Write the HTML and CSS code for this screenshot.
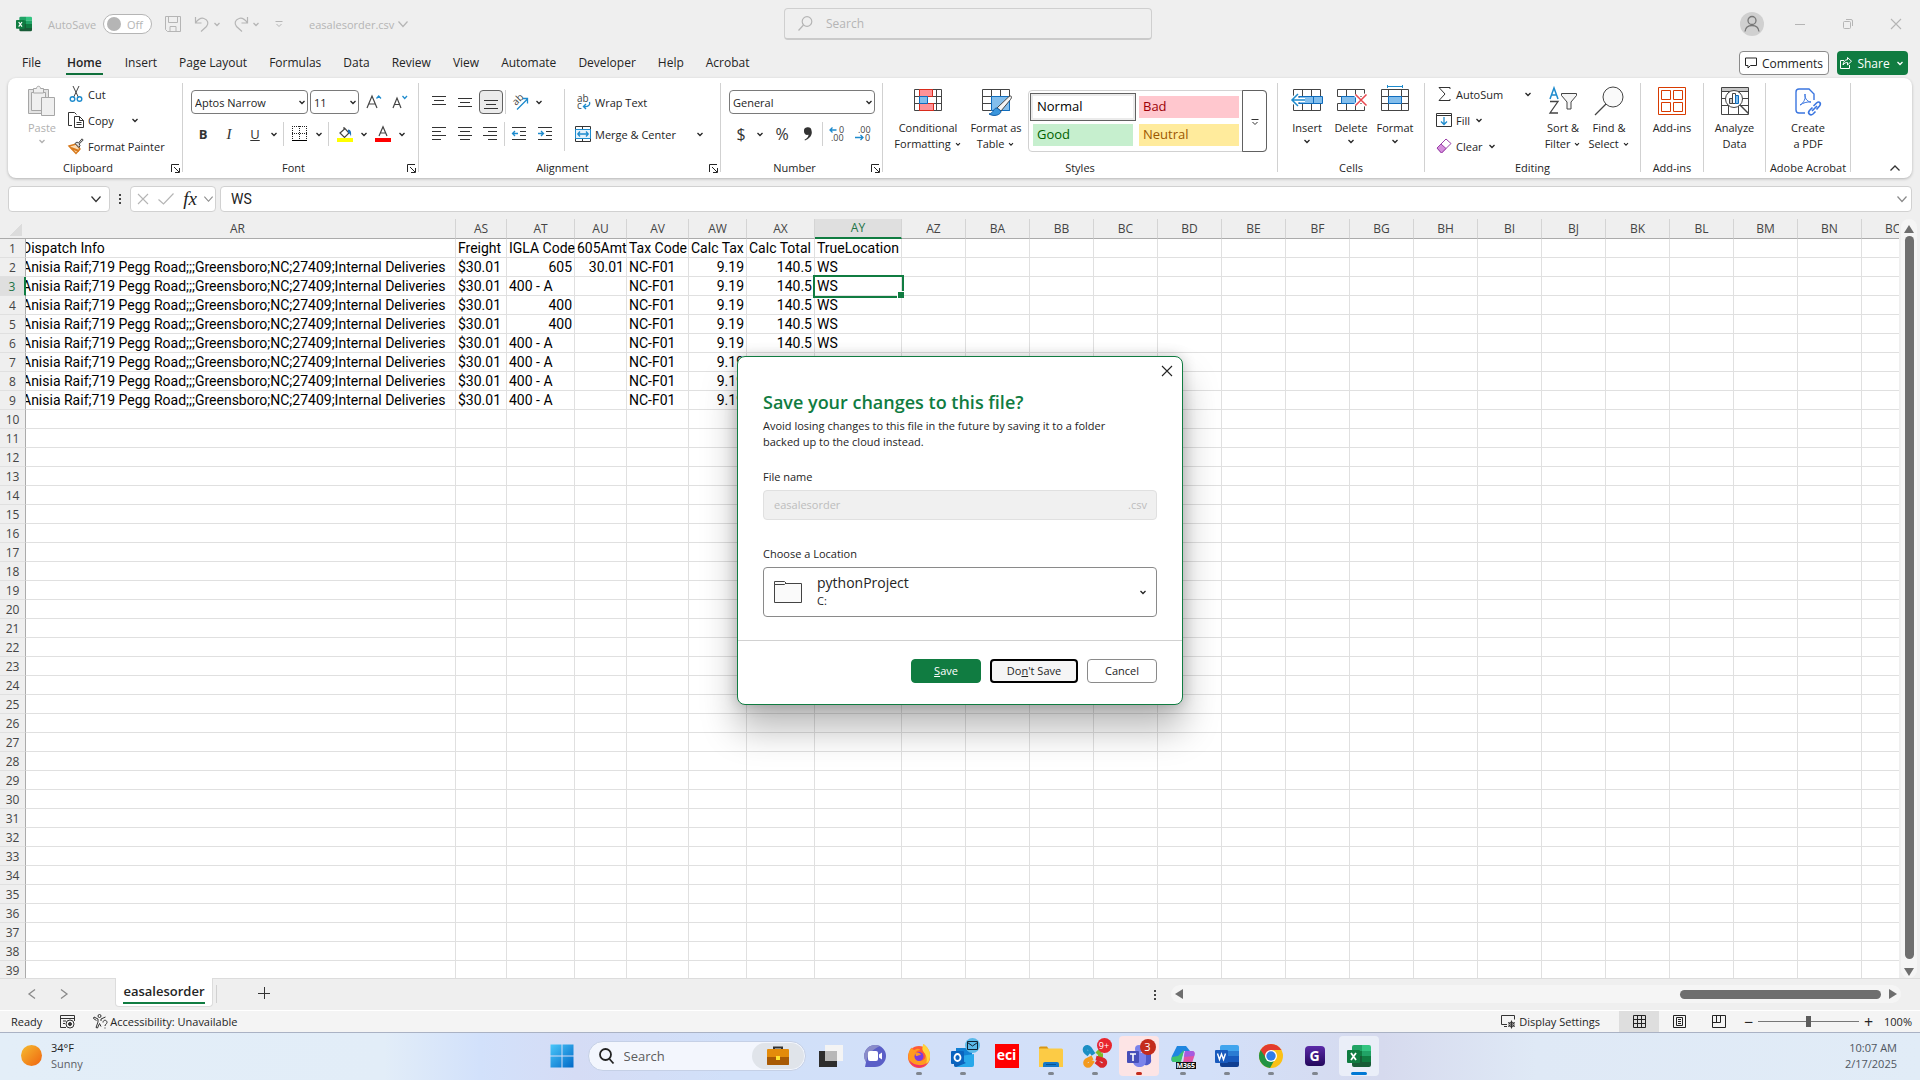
FILE: index.html
```html
<!DOCTYPE html>
<html lang="en">
<head>
    <meta charset="UTF-8">
    <meta name="viewport" content="width=device-width, initial-scale=1.0">
    <title>easalesorder.csv - Excel</title>
    <link rel="stylesheet" href="styles.css">
</head>
<body>
    <!-- shared icons -->
    <svg class="defs" aria-hidden="true">
        <symbol id="chev" viewBox="0 0 10 10"><path d="M2.500 4L5 6.500 7.500 4" fill="none" stroke="currentColor" stroke-width="1.300"/></symbol>
        <symbol id="chev-big" viewBox="0 0 12 12"><path d="M1.500 3.500L6 8.500l4.500-5" fill="none" stroke="currentColor" stroke-width="1.200"/></symbol>
        <symbol id="launcher" viewBox="0 0 9 9"><path d="M.5 8V.5H8M3 3l5 5M8.500 4v4.500H4" fill="none" stroke="currentColor"/></symbol>
        <symbol id="close" viewBox="0 0 12 12"><path d="M1 1l10 10M11 1L1 11" fill="none" stroke="currentColor" stroke-width="1.100"/></symbol>
        <symbol id="excel" viewBox="0 0 24 24">
            <path d="M7 1h8v11H5V3a2 2 0 0 1 2-2z" fill="#21a366"/><path d="M15 1h7a2 2 0 0 1 2 2v4h-9z" fill="#33c481"/>
            <path d="M5 7h10v6H5z" fill="#107c41"/><path d="M15 7h9v5h-9z" fill="#21a366"/>
            <path d="M15 12h9v6h-9z" fill="#107c41"/><path d="M5 12h10v6h9v3a2 2 0 0 1-2 2H7a2 2 0 0 1-2-2z" fill="#185c37"/>
            <rect y="6" width="13" height="13" rx="1" fill="#107c41"/><path d="M4 9l5 7M9 9l-5 7" stroke="#fff" stroke-width="1.800"/>
        </symbol>
    </svg>

    <!-- title bar -->
    <header class="titlebar">
        <svg class="app-icon" viewBox="0 0 24 24"><use href="#excel"/></svg>
        <label class="autosave">AutoSave
            <span class="toggle"><input type="checkbox"><i></i>Off</span>
        </label>
        <button class="tb" aria-label="Save"><svg width="16" height="16" viewBox="0 0 16 16" fill="none" stroke="currentColor"><path d="M.5.5h15v15h-13l-2-2zM3.500.5v6h9v-6M5 15.500v-5h6v5"/></svg></button>
        <button class="tb" aria-label="Undo"><svg width="16" height="16" viewBox="0 0 16 16" fill="none" stroke="currentColor" stroke-width="1.200"><path d="M1.500 1v6h6M1.500 7C4 3.500 7 1.500 10 2.500c4 1.200 5 5 2.500 8L7 15.500"/></svg></button>
        <button class="tb list" aria-label="Undo list"><svg width="10" height="10"><use href="#chev"/></svg></button>
        <button class="tb" aria-label="Redo"><svg width="16" height="16" viewBox="0 0 16 16" fill="none" stroke="currentColor" stroke-width="1.200"><path d="M14.500 1v6h-6M14.500 7C12 3.500 9 1.500 6 2.500c-4 1.200-5 5-2.500 8L9 15.500"/></svg></button>
        <button class="tb list" aria-label="Redo list"><svg width="10" height="10"><use href="#chev"/></svg></button>
        <button class="tb customize" aria-label="Customize toolbar"><svg width="8" height="8" viewBox="0 0 8 8" fill="none" stroke="currentColor"><path d="M.5 1.500h7M1.500 4L4 6.500 6.500 4"/></svg></button>
        <button class="doc-name">easalesorder.csv <svg width="12" height="12"><use href="#chev-big"/></svg></button>
        <label class="search">
            <svg width="15" height="15" viewBox="0 0 15 15" fill="none" stroke="#b5b5b5" stroke-width="1.200"><circle cx="9" cy="5.500" r="4.800"/><path d="M5.500 9L.5 14.500"/></svg>
            <input type="text" placeholder="Search" aria-label="Search">
        </label>
        <div class="window-buttons">
            <button class="avatar" aria-label="Account"><svg width="16" height="18" viewBox="0 0 16 18" fill="none" stroke="#777" stroke-width="1.300"><circle cx="8" cy="5.500" r="4"/><path d="M1 16.500c.5-4 3-6 7-6s6.500 2 7 6"/></svg></button>
            <button aria-label="Minimize"><svg width="10" height="10" viewBox="0 0 10 10"><path d="M0 5.500h10" stroke="currentColor"/></svg></button>
            <button aria-label="Restore"><svg width="10" height="10" viewBox="0 0 10 10" fill="none" stroke="currentColor"><rect x=".5" y="2.500" width="7" height="7" rx="1"/><path d="M3 .5h5a1.500 1.500 0 0 1 1.500 1.500v5"/></svg></button>
            <button aria-label="Close"><svg width="12" height="12"><use href="#close"/></svg></button>
        </div>
    </header>

    <!-- ribbon tabs -->
    <nav class="tabs">
        <button class="file">File</button>
        <button class="active">Home</button>
        <button>Insert</button>
        <button>Page Layout</button>
        <button>Formulas</button>
        <button>Data</button>
        <button>Review</button>
        <button>View</button>
        <button>Automate</button>
        <button>Developer</button>
        <button>Help</button>
        <button>Acrobat</button>
        <div class="tab-actions">
            <button class="comments"><svg width="12" height="12" viewBox="0 0 12 12" fill="none" stroke="currentColor"><path d="M.5 1h11v7.500h-6L3 11V8.500H.5z"/></svg>Comments</button>
            <button class="share"><svg width="12" height="12" viewBox="0 0 12 12" fill="none" stroke="currentColor"><path d="M4 3.500H.5v8h9V8M7.500.5v2.200C5 2.700 3.500 4.500 3 8c1.500-2 2.500-2.500 4.500-2.500V8l4-3.800z"/></svg>Share<svg width="10" height="10"><use href="#chev"/></svg></button>
        </div>
    </nav>

    <!-- ribbon -->
    <section class="ribbon">
        <div class="group clipboard">
            <div class="tools">
                <button class="big disabled">
                    <svg width="28" height="32" viewBox="0 0 28 32" fill="#efefef" stroke="#a6a6a6"><path d="M.5 4.500h20v24H.5z" fill="#e3e3e3"/><path d="M3.500 7.500h14v18h-14z"/><path d="M5.500 8V3.500h3c0-3 4-3 4 0h3V8z"/><path d="M13.500 12.500h13v18h-13z"/></svg>
                    <span>Paste</span><svg width="10" height="10"><use href="#chev"/></svg>
                </button>
                <div class="small-list">
                    <button><svg width="16" height="16" viewBox="0 0 16 16" fill="none" stroke="#444"><path d="M5 0l5.500 11.500M11 0L5.500 11.500"/><circle cx="4.500" cy="13" r="2.300" stroke="#1e8bcd" stroke-width="1.400"/><circle cx="11.500" cy="13" r="2.300" stroke="#1e8bcd" stroke-width="1.400"/></svg>Cut</button>
                    <button><svg width="16" height="16" viewBox="0 0 16 16" fill="none" stroke="#333"><path d="M4 13.500H.5V.5h6l2 2"/><path d="M6.500 4.500h5l4 4v7h-9zM11.500 4.500v4h4M8.500 10.500h5M8.500 12.500h5"/></svg>Copy<svg class="far" width="10" height="10"><use href="#chev"/></svg></button>
                    <button><svg width="16" height="16" viewBox="0 0 16 16"><path d="M1 8l7-2 4 5-4 4.500z" fill="#fbdcb4" stroke="#d87a1d" stroke-width="1.400"/><path d="M3 10l8 3" stroke="#d87a1d" stroke-width="2"/><path d="M7 5.500l2-1.500 1.500 1L14 .8l1.200 1.200-4 4 .8 1.500-1 2z" fill="#ddd" stroke="#444"/></svg>Format Painter</button>
                </div>
            </div>
            <div class="caption"><span>Clipboard</span><button aria-label="Clipboard settings"><svg width="9" height="9"><use href="#launcher"/></svg></button></div>
        </div>

        <div class="group font">
            <div class="tools rows">
                <div class="row">
                    <span class="combo name"><select aria-label="Font"><option>Aptos Narrow</option></select><svg width="10" height="10"><use href="#chev"/></svg></span>
                    <span class="combo size"><select aria-label="Font size"><option>11</option></select><svg width="10" height="10"><use href="#chev"/></svg></span>
                    <button class="ico" aria-label="Increase font size"><svg width="16" height="16" viewBox="0 0 16 16" fill="none"><path d="M1 14L6 2l5 12M2.800 10h6.400" stroke="#444" stroke-width="1.200"/><path d="M10.500 4.500L12.700 2 15 4.500" stroke="#1e8bcd" stroke-width="1.300"/></svg></button>
                    <button class="ico" aria-label="Decrease font size"><svg width="16" height="16" viewBox="0 0 16 16" fill="none"><path d="M1 14L5 4l4 10M2.500 10.500h5" stroke="#444" stroke-width="1.200"/><path d="M10.500 2L12.700 4.500 15 2" stroke="#1e8bcd" stroke-width="1.300"/></svg></button>
                </div>
                <div class="row">
                    <button class="ico"><b>B</b></button>
                    <button class="ico"><i>I</i></button>
                    <button class="ico"><u>U</u></button>
                    <button class="drop" aria-label="Underline list"><svg width="10" height="10"><use href="#chev"/></svg></button>
                    <span class="sep"></span>
                    <button class="ico" aria-label="Borders"><svg width="16" height="16" viewBox="0 0 16 16" fill="none" stroke="#222"><path d="M0 .5h15M0 7.500h15M.5 0v14M7.500 0v14M14.500 0v14" stroke-dasharray="1 1"/><path d="M0 14.500h15" stroke="#000"/></svg></button>
                    <button class="drop" aria-label="Border list"><svg width="10" height="10"><use href="#chev"/></svg></button>
                    <span class="sep"></span>
                    <button class="ico" aria-label="Fill color"><svg width="16" height="16" viewBox="0 0 16 16" fill="none"><path d="M7 1v3M3 7l5-4.500L12 7l-4.500 4.500z" stroke="#444" stroke-width="1.200"/><path d="M11 3.500c3 0 3.500 3 3 7-.7-2.500-1.500-3-3-4z" fill="#1d6fb8"/><path d="M0 12h16v4H0z" fill="#ff0"/></svg></button>
                    <button class="drop" aria-label="Fill colors"><svg width="10" height="10"><use href="#chev"/></svg></button>
                    <button class="ico" aria-label="Font color"><svg width="16" height="16" viewBox="0 0 16 16" fill="none"><path d="M4 10L8 .8 12 10M5.200 7h5.600" stroke="#444" stroke-width="1.200"/><path d="M0 12h16v4H0z" fill="red"/></svg></button>
                    <button class="drop" aria-label="Font colors"><svg width="10" height="10"><use href="#chev"/></svg></button>
                </div>
            </div>
            <div class="caption"><span>Font</span><button aria-label="Font settings"><svg width="9" height="9"><use href="#launcher"/></svg></button></div>
        </div>

        <div class="group alignment">
            <div class="tools">
                <div class="rows align-left">
                    <div class="row">
                        <button class="ico" aria-label="Top align"><svg width="14" height="14" viewBox="0 0 14 14" stroke="#333"><path d="M0 1.500h14M2 5.500h10M0 9.500h14"/></svg></button>
                        <button class="ico" aria-label="Middle align"><svg width="14" height="14" viewBox="0 0 14 14" stroke="#333"><path d="M0 3.500h14M2 7.500h10M0 11.500h14"/></svg></button>
                        <button class="ico pressed" aria-label="Bottom align"><svg width="14" height="14" viewBox="0 0 14 14" stroke="#333"><path d="M0 5.500h14M2 9.500h10M0 13.500h14"/></svg></button>
                        <span class="sep tight"></span>
                        <button class="ico" aria-label="Orientation"><svg width="16" height="16" viewBox="0 0 16 16" fill="none"><text x="0" y="0" transform="translate(4 12) rotate(-45)" font-size="10" fill="#444">ab</text><path d="M5 15.500L15.500 5M10.500 4.500h5v5" stroke="#1e8bcd" stroke-width="1.300"/></svg></button>
                        <button class="drop" aria-label="Orientation list"><svg width="10" height="10"><use href="#chev"/></svg></button>
                    </div>
                    <div class="row">
                        <button class="ico" aria-label="Align left"><svg width="14" height="14" viewBox="0 0 14 14" stroke="#333"><path d="M0 .5h14M0 4.500h9M0 8.500h14M0 12.500h9"/></svg></button>
                        <button class="ico" aria-label="Center"><svg width="14" height="14" viewBox="0 0 14 14" stroke="#333"><path d="M0 .5h14M2 4.500h10M0 8.500h14M2 12.500h10"/></svg></button>
                        <button class="ico" aria-label="Align right"><svg width="14" height="14" viewBox="0 0 14 14" stroke="#333"><path d="M0 .5h14M5 4.500h9M0 8.500h14M5 12.500h9"/></svg></button>
                        <span class="sep tight"></span>
                        <button class="ico" aria-label="Decrease indent"><svg width="14" height="14" viewBox="0 0 14 14" fill="none" stroke="#333"><path d="M0 .5h14M8 4.500h6M8 8.500h6M0 12.500h14"/><path d="M6 6.500H.5M3 4L.5 6.500 3 9" stroke="#1e8bcd" stroke-width="1.300"/></svg></button>
                        <button class="ico" aria-label="Increase indent"><svg width="14" height="14" viewBox="0 0 14 14" fill="none" stroke="#333"><path d="M0 .5h14M8 4.500h6M8 8.500h6M0 12.500h14"/><path d="M0 6.500h5.500M3 4l2.500 2.500L3 9" stroke="#1e8bcd" stroke-width="1.300"/></svg></button>
                    </div>
                </div>
                <div class="rows align-right">
                    <button class="line"><svg width="16" height="16" viewBox="0 0 16 16" fill="none"><text x="2" y="8" font-size="10" fill="#444">ab</text><text x="2" y="15" font-size="10" fill="#444">c</text><path d="M14.500 8c1 3-1 5-6 4.500M11 10l-2.500 2.500L11 15" stroke="#1e8bcd" stroke-width="1.400"/></svg>Wrap Text</button>
                    <button class="line"><svg width="16" height="16" viewBox="0 0 16 16" fill="none"><path d="M.5.500h15v15H.5z" stroke="#333"/><path d="M7.500.5v3M7.500 12.500v3" stroke="#333"/><path d="M.5 3.500h15v9H.5z" fill="#e6f2fb" stroke="#1e8bcd"/><path d="M3 8h10M5 5.500L2.800 8 5 10.500M11 5.500L13.200 8 11 10.500" stroke="#1e8bcd" stroke-width="1.300"/></svg>Merge &amp; Center<svg class="far" width="10" height="10"><use href="#chev"/></svg></button>
                </div>
            </div>
            <div class="caption"><span>Alignment</span><button aria-label="Alignment settings"><svg width="9" height="9"><use href="#launcher"/></svg></button></div>
        </div>

        <div class="group number">
            <div class="tools rows">
                <div class="row">
                    <span class="combo format"><select aria-label="Number format"><option>General</option></select><svg width="10" height="10"><use href="#chev"/></svg></span>
                </div>
                <div class="row">
                    <button class="ico sign">$</button>
                    <button class="drop currency" aria-label="Currencies"><svg width="10" height="10"><use href="#chev"/></svg></button>
                    <button class="ico sign">%</button>
                    <button class="ico" aria-label="Comma style"><svg width="10" height="14" viewBox="0 0 10 14"><path d="M1 4.500a3.500 3.500 0 0 1 7.500-1C10 8 6 12 2 13.500l-.5-.7C4.500 11 5.500 9.500 5.500 7.800 2.500 8.500 1 6.500 1 4.500z" fill="#333"/></svg></button>
                    <span class="sep tight"></span>
                    <button class="ico" aria-label="Increase decimal"><svg width="16" height="16" viewBox="0 0 16 16" fill="none"><text x="10" y="7" font-size="9" fill="#444">0</text><text x="2" y="15" font-size="9" fill="#444">.00</text><path d="M7.500 4H1M3.500 1.500L1 4l2.500 2.500" stroke="#1e8bcd" stroke-width="1.300"/></svg></button>
                    <button class="ico" aria-label="Decrease decimal"><svg width="16" height="16" viewBox="0 0 16 16" fill="none"><text x="3" y="7" font-size="9" fill="#444">.00</text><text x="10" y="15" font-size="9" fill="#444">0</text><path d="M0 11.500h8M5.500 9L8 11.500 5.500 14" stroke="#1e8bcd" stroke-width="1.300"/></svg></button>
                </div>
            </div>
            <div class="caption"><span>Number</span><button aria-label="Number settings"><svg width="9" height="9"><use href="#launcher"/></svg></button></div>
        </div>

        <div class="group styles">
            <div class="tools">
                <button class="big wide">
                    <svg width="28" height="32" viewBox="0 0 28 32" fill="none"><path d="M.5 4.500h27v21H.5zM.5 11.500h27M.5 18.500h27M5.500 4.500v21M22.500 4.500v21" stroke="#444"/><path d="M5.500 4.500h13v7h-13zM5.500 18.500h14v7h-14z" fill="#ff9297" stroke="#d92b1c"/><path d="M5.500 11.500h8v7h-8z" fill="#83beec" stroke="#0f6cbd"/></svg>
                    <span>Conditional<br>Formatting <svg width="8" height="8"><use href="#chev"/></svg></span>
                </button>
                <button class="big mid">
                    <svg width="32" height="32" viewBox="-2 0 32 32" fill="none"><path d="M.5 4.500h27v21H.5zM.5 11.500h27M.5 18.500h27M9.500 4.500v21M18.500 4.500v21" stroke="#444"/><path d="M9.500 11.500h18v14h-18z" fill="#83beec" stroke="#0f6cbd"/><path d="M27 11.500c3-1.500 3 1 1.500 3L19 26l-4-3z" fill="#f5f5f5" stroke="#444"/><path d="M15 23c-4 0-3 5-8 6 5 3 12 1 12-3z" fill="#3a96dd" stroke="#0f5ea8"/></svg>
                    <span>Format as<br>Table <svg width="8" height="8"><use href="#chev"/></svg></span>
                </button>
                <div class="gallery">
                    <div class="swatches">
                        <button class="normal">Normal</button>
                        <button class="bad">Bad</button>
                        <button class="good">Good</button>
                        <button class="neutral">Neutral</button>
                    </div>
                    <button class="more" aria-label="More styles"><svg width="8" height="8" viewBox="0 0 8 8" fill="none" stroke="#333"><path d="M.5 1.500h7M1.500 4L4 6.500 6.500 4"/></svg></button>
                </div>
            </div>
            <div class="caption"><span>Styles</span></div>
        </div>

        <div class="group cells">
            <div class="tools">
                <button class="big">
                    <svg width="32" height="32" viewBox="0 0 32 32" fill="none"><path d="M2.500 4.500h27v21h-27zM2.500 11.500h27M2.500 18.500h27M11.500 4.500v21M20.500 4.500v21" stroke="#444"/><path d="M8 11.500h23.500v7H8z" fill="#83beec" stroke="#0f6cbd"/><path d="M22.500 11.500v7" stroke="#0f6cbd"/><path d="M14 15H1M7 9l-6 6 6 6" stroke="#fff" stroke-width="4"/><path d="M14 15H1M7 9l-6 6 6 6" stroke="#1e8bcd" stroke-width="1.500"/></svg>
                    <span>Insert</span><svg width="10" height="10"><use href="#chev"/></svg>
                </button>
                <button class="big">
                    <svg width="32" height="32" viewBox="0 0 32 32" fill="none"><path d="M2.500 4.500h27v7h-27zM2.500 18.500h27v7h-27zM11.500 4.500v7M20.500 4.500v7M11.500 18.500v7M20.500 18.500v7" stroke="#444"/><path d="M6.500 11.500h14v7h-14z" fill="#83beec" stroke="#0f6cbd"/><path d="M20.500 9.500l11 11M31.500 9.500l-11 11" stroke="#fff" stroke-width="4"/><path d="M20.500 9.500l11 11M31.500 9.500l-11 11" stroke="#e8484f" stroke-width="1.500"/></svg>
                    <span>Delete</span><svg width="10" height="10"><use href="#chev"/></svg>
                </button>
                <button class="big">
                    <svg width="32" height="32" viewBox="0 0 32 32" fill="none"><path d="M2.500 4.500h27v21h-27zM2.500 11.500h27M2.500 18.500h27M9.500 4.500v21M22.500 4.500v21" stroke="#444"/><path d="M9.500 11.500h13v7h-13z" fill="#83beec" stroke="#0f6cbd"/><path d="M8.500 0v3M23.500 0v3M8.500 1.500h15" stroke="#1e8bcd"/></svg>
                    <span>Format</span><svg width="10" height="10"><use href="#chev"/></svg>
                </button>
            </div>
            <div class="caption"><span>Cells</span></div>
        </div>

        <div class="group editing">
            <div class="tools">
                <div class="small-list">
                    <button><svg width="16" height="16" viewBox="0 0 16 16" fill="none" stroke="#333"><path d="M14 3V1.500H3L9 8l-6 6.500h11V13"/></svg>AutoSum<svg class="far" width="10" height="10"><use href="#chev"/></svg></button>
                    <button><svg width="16" height="16" viewBox="0 0 16 16" fill="none" stroke="#333"><path d="M.5 1.500h15v13H.5zM.5 3.500h15"/><path d="M8 5v7.500M5 9.500l3 3 3-3" stroke="#1e8bcd" stroke-width="1.300"/></svg>Fill<svg width="10" height="10"><use href="#chev"/></svg></button>
                    <button><svg width="16" height="16" viewBox="0 0 16 16" stroke="#9a3fa8"><path d="M1 10l9-9 5 4.500-9.500 9.500z" fill="#fff"/><path d="M1 10l4-4 5 4.500L5.500 15z" fill="#d58fdc"/></svg>Clear<svg width="10" height="10"><use href="#chev"/></svg></button>
                </div>
                <button class="big">
                    <svg width="28" height="32" viewBox="0 0 28 32" fill="none"><path d="M1 14L5 3l4 11M2.500 10h5" stroke="#1e8bcd" stroke-width="1.500"/><path d="M1 16.500h8L1 28h8" stroke="#444" stroke-width="1.300"/><path d="M12.500 8.500h15v2L22 17v7h-4v-7l-5.500-6.500z" fill="#f5f5f5" stroke="#444"/></svg>
                    <span>Sort &amp;<br>Filter <svg width="8" height="8"><use href="#chev"/></svg></span>
                </button>
                <button class="big">
                    <svg width="30" height="32" viewBox="0 0 30 32" fill="none" stroke="#444"><circle cx="19" cy="12" r="10" fill="#fafafa"/><path d="M12 19L1 30" stroke-width="1.300"/></svg>
                    <span>Find &amp;<br>Select <svg width="8" height="8"><use href="#chev"/></svg></span>
                </button>
            </div>
            <div class="caption"><span>Editing</span></div>
        </div>

        <div class="group addins">
            <div class="tools">
                <button class="big">
                    <svg width="28" height="32" viewBox="0 0 28 32" fill="none" stroke="#d83b01"><path d="M.5 2.500h27v27H.5zM3.500 5.500h9v9h-9zM15.500 5.500h9v9h-9zM3.500 17.500h9v9h-9zM15.500 17.500h9v9h-9z"/></svg>
                    <span>Add-ins</span>
                </button>
            </div>
            <div class="caption"><span>Add-ins</span></div>
        </div>

        <div class="group analyze">
            <div class="tools">
                <button class="big">
                    <svg width="28" height="32" viewBox="0 0 28 32" fill="none" stroke="#444"><path d="M.5 2.500h27v27H.5z"/><path d="M1 3h26v4H1z" fill="#c8c8c8" stroke="none"/><path d="M.5 6.500h27M.5 13.500h27M.5 20.500h27M7.500 6.500v23M17.500 20.500v9"/><circle cx="13" cy="14" r="8.500" fill="#fff"/><path d="M8.500 13.500h3v5h-3z" fill="#c8c8c8"/><path d="M11.500 8.500h3v10h-3z"/><path d="M14.500 10.500h3v8h-3z" fill="#83beec" stroke="#0f6cbd"/><path d="M19.500 20.500l8 8" stroke-width="1.500"/></svg>
                    <span>Analyze<br>Data</span>
                </button>
            </div>
            <div class="caption"></div>
        </div>

        <div class="group acrobat">
            <div class="tools">
                <button class="big wide">
                    <svg width="26" height="32" viewBox="0 0 26 32" fill="none" stroke="#3b76e0" stroke-width="1.400"><path d="M10 28H4a3 3 0 0 1-3-3V7a3 3 0 0 1 3-3h10l5 5v6"/><path d="M5 20c4-2 6-7 5-11-1 3 2 8 6 8-4-.5-8 1-11 3z" stroke-width="1"/><path d="M17 26l5-5M17.500 22.500l-3 3c-2.500 3 1 5.500 3.500 3.500l2.500-2.500M18.500 21l3-3c3-2.500 5 .5 3 3L21.500 24.500" stroke-width="1.600"/></svg>
                    <span>Create<br>a PDF</span>
                </button>
            </div>
            <div class="caption"><span>Adobe Acrobat</span></div>
        </div>
        <button class="collapse" aria-label="Collapse ribbon"><svg width="12" height="12" viewBox="0 0 12 12" fill="none" stroke="#333" stroke-width="1.300"><path d="M1.500 8.500L6 4l4.500 4.500"/></svg></button>
    </section>

    <!-- formula bar -->
    <section class="formula-bar">
        <label class="name-box"><input type="text" aria-label="Name box"><svg width="12" height="12"><use href="#chev-big"/></svg></label>
        <span class="dots"></span>
        <div class="fx-box">
            <svg width="12" height="12"><use href="#close"/></svg>
            <svg width="16" height="12" viewBox="0 0 16 12" fill="none" stroke="currentColor" stroke-width="1.200"><path d="M.5 6.500l5 4.500L15.500.5"/></svg>
            <button>fx</button>
            <svg width="11" height="12"><use href="#chev-big"/></svg>
        </div>
        <label class="formula"><input type="text" value="WS" aria-label="Formula"><svg width="12" height="12"><use href="#chev-big"/></svg></label>
    </section>

    <!-- sheet -->
    <main class="sheet">
        <div class="grid-wrap">
            <table id="grid">
                <thead></thead>
                <tbody></tbody>
            </table>
        </div>
        <div class="vscroll">
            <div class="track"><i class="up"></i><b></b><i class="down"></i></div>
        </div>
    </main>

    <section class="sheet-tabs">
        <button class="nav-arrow" aria-label="Previous sheet"><svg width="8" height="10" viewBox="0 0 8 10" fill="none" stroke="#8a8a8a" stroke-width="1.300"><path d="M7 .5L1 5l6 4.500"/></svg></button>
        <button class="nav-arrow" aria-label="Next sheet"><svg width="8" height="10" viewBox="0 0 8 10" fill="none" stroke="#8a8a8a" stroke-width="1.300"><path d="M1 .5L7 5 1 9.500"/></svg></button>
        <button class="sheet-tab"><span>easalesorder</span></button>
        <button class="add-sheet" aria-label="New sheet"><svg width="12" height="12" viewBox="0 0 12 12" stroke="#333"><path d="M0 6.500h12M6.500 0v12"/></svg></button>
        <span class="dots"></span>
        <div class="hscroll"><i class="left"></i><b></b><i class="right"></i></div>
    </section>

    <footer class="status">
        <span>Ready</span>
        <svg width="15" height="14" viewBox="0 0 15 14" fill="none" stroke="#333"><path d="M6 12.500H.5V.5h14V6M.5 3.500h14M3 6h3M3 8.500h2"/><circle cx="10" cy="9" r="4"/><circle cx="10" cy="9" r="1.500" fill="#333"/></svg>
        <span class="access"><svg width="15" height="15" viewBox="0 0 15 15" fill="none" stroke="#333"><circle cx="6.500" cy="2" r="1.500"/><path d="M1 3l4 2v3l-2 5.500 1.500.5 2-4.500 1.500 3M1 3L.5 4.500 3.500 6.500M12.500 3L8 5v2"/><path d="M10 8.500c0-3 4-3 4 0 0 1.500-2 1.500-2 3.500M12 13.500v1"/></svg>Accessibility: Unavailable</span>
        <div class="status-right">
            <button class="display"><svg width="15" height="15" viewBox="0 0 15 15" fill="none" stroke="#333"><path d="M6 10.500H.5V1.500h13v4M3 12.500h3"/><circle cx="10.500" cy="10.500" r="2.500"/><path d="M10.500 6.500v8M7 8.500l7 4M14 8.500l-7 4"/></svg>Display Settings</button>
            <button class="view on" aria-label="Normal view"><svg width="13" height="13" viewBox="0 0 13 13" fill="none" stroke="#222"><path d="M.5.5h12v12H.5zM4.500.5v12M8.500.5v12M.5 4.500h12M.5 8.500h12"/></svg></button>
            <button class="view" aria-label="Page layout view"><svg width="13" height="13" viewBox="0 0 13 13" fill="none" stroke="#222"><path d="M.5.5h12v12H.5zM3.500 2.500h6v8h-6zM5 4.500h3M5 6.500h3M5 8.500h3"/></svg></button>
            <button class="view" aria-label="Page break view"><svg width="14" height="13" viewBox="0 0 14 13" fill="none" stroke="#222"><path d="M.5.5h13v12H.5zM4.500.5v7M.5 7.500h8v-7"/></svg></button>
            <button class="zoom-btn">−</button>
            <input class="zoom" type="range" value="50" aria-label="Zoom">
            <button class="zoom-btn">+</button>
            <span class="percent">100%</span>
        </div>
    </footer>

    <!-- windows taskbar -->
    <footer class="taskbar">
        <div class="weather"><i></i><p>34°F<br><span>Sunny</span></p></div>
        <div class="apps">
            <button class="app start" aria-label="Start"><svg viewBox="0 0 24 24" fill="url(#win)"><linearGradient id="win" x1="0" y1="0" x2="24" y2="24" gradientUnits="userSpaceOnUse"><stop stop-color="#4cc9fb"/><stop offset="1" stop-color="#0067c6"/></linearGradient><path d="M.5.5h11v11H.5zM12.500.5h11v11h-11zM.5 12.500h11v11H.5zM12.500 12.500h11v11h-11z"/></svg></button>
            <label class="task-search">
                <svg width="15" height="16" viewBox="0 0 15 16" fill="none" stroke="#222" stroke-width="1.800"><circle cx="6.500" cy="6.500" r="5.500"/><path d="M10.500 11l4 4.500"/></svg>
                <input type="text" placeholder="Search" aria-label="Search Windows">
                <span class="case"><svg width="22" height="20" viewBox="0 0 22 20"><path d="M7 3V1.500h8V3" fill="none" stroke="#333" stroke-width="2"/><rect y="3" width="22" height="16" rx="1" fill="#e38b0b"/><path d="M0 11h22v7a1 1 0 0 1-1 1H1a1 1 0 0 1-1-1z" fill="#a85a05"/><rect x="9" y="10" width="4" height="4" fill="#ffe32e"/></svg></span>
            </label>
            <button class="app" aria-label="Task view"><svg viewBox="0 0 24 24"><rect y="7" width="18" height="16" fill="#2d2d2d"/><rect x="6" y="1" width="18" height="16" fill="#f4f4f4"/><path d="M6 7h12v10H6z" fill="#b8b8b8"/></svg></button>
            <button class="app" aria-label="Chat"><svg viewBox="0 0 24 24"><path d="M12 1a11 11 0 1 1 0 22H2l1-5A11 11 0 0 1 12 1z" fill="#5b5fc7"/><path d="M12 1a11 11 0 0 0-9 17C5 10 10 5 17 2a11 11 0 0 0-5-1z" fill="#8a8cc9"/><rect x="5" y="7" width="10" height="10" rx="2" fill="#fff"/><path d="M16 10.500l3-2v7l-3-2z" fill="#fff"/></svg></button>
            <button class="app run" aria-label="Firefox"><svg viewBox="0 0 24 24"><circle cx="12" cy="13" r="11" fill="#ff5a36"/><path d="M1.500 10C2 6 4 4 4.500 3.500 5 5 6 6 7.500 6c4-3 6 0 6 0-4 0-6 3-5 7 1 5 9 5 10 0 .5-3-1-5-3-7 0-3 1-5 1-6 4 3 7 7 6.500 13-.5 6-5 10-11 10C3 23 .5 16 1.500 10z" fill="#ff9a1f"/><path d="M16.500 0c5 4 7 8 6.500 13-.4 4-2.500 7-5 8.500 3-4 2-10-1-13-2-2-2-5-.5-8.500z" fill="#ffd43a"/><circle cx="12" cy="12.500" r="4.500" fill="#7a3be0"/><path d="M8 9c3-1 5 0 6 2-2-.5-3 1-5 1z" fill="#ff9a1f"/><path d="M2 16c3 9 15 10 19 2-5 5-14 4-19-2z" fill="#f0306a"/></svg></button>
            <button class="app run" aria-label="Outlook"><svg viewBox="0 0 24 24"><path d="M5 4h16v10H5z" fill="#1180d4"/><path d="M3 13l20-3v11a2 2 0 0 1-2 2H5a2 2 0 0 1-2-2z" fill="#28a8ea"/><path d="M3 12l12 7-10 4a2 2 0 0 1-2-2z" fill="#0f5fb5"/><rect y="7" width="13" height="13" rx="1" fill="#0a64bf"/><ellipse cx="6.500" cy="13.500" rx="3" ry="3.500" fill="none" stroke="#fff" stroke-width="1.800"/></svg><span class="badge mail"><svg width="11" height="9" viewBox="0 0 11 9" fill="none" stroke="#123"><path d="M.5.5h10v8H.5zM.5 1.500l5 3.500 5-3.500"/></svg></span></button>
            <button class="app" aria-label="eci"><span class="eci">eci</span></button>
            <button class="app run" aria-label="File Explorer"><svg viewBox="0 0 24 24"><path d="M0 4a1.500 1.500 0 0 1 1.500-1.500H8l2 3H0z" fill="#d99613"/><path d="M0 4.500h22.500A1.500 1.500 0 0 1 24 6v17H0z" fill="#fccb45"/><path d="M4 23v-3a2 2 0 0 1 2-2h12a2 2 0 0 1 2 2v3z" fill="#1478c8"/><path d="M7 20.500h10" stroke="#0b5490"/></svg></button>
            <button class="app run" aria-label="Tools"><svg viewBox="0 0 24 24" fill="none" stroke-width="4.500"><path d="M10.500 10.500L6.500 4.500C4 1 0 5 3 8l3 2.500" stroke="#1c8fc4"/><path d="M14 10l4-4M15 11.500h5" stroke="#7db928"/><path d="M9.500 13.500l-6 3c-3 3 1 7 3.500 4l3-4" stroke="#f39a1e"/><path d="M13 14l6 1.500c5 1 3 7-1 6l-5-4" stroke="#d9282c"/></svg><span class="badge count">9+</span></button>
            <button class="app run teams" aria-label="Teams"><svg viewBox="0 0 24 24"><circle cx="19" cy="7" r="3.500" fill="#5059c9"/><path d="M15 9h9v6a5 5 0 0 1-9 4z" fill="#5059c9"/><circle cx="12" cy="5" r="4" fill="#7b83eb"/><path d="M6 9h13v8c0 8-13 8-13 0z" fill="#7b83eb"/><rect y="7" width="12" height="12" rx="1" fill="#464eb8"/><path d="M3 10h6M6 10v7" stroke="#fff" stroke-width="1.600"/></svg><span class="badge three">3</span></button>
            <button class="app run" aria-label="M365 Copilot"><svg viewBox="0 0 24 24"><path d="M6 2h9l4 5h-6L9 18H3c-3 0-3-3-2-6z" fill="#1f86e0"/><path d="M1 13l6-1 6-6-3 12H3c-2 0-3-2-2-5z" fill="#3ec46d"/><path d="M14 7h7c3 0 3 3 2 6l-2 6h-9z" fill="#e255a4"/><path d="M14 7h7c3 0 3 3 2 5l-10 1z" fill="#a55be0"/></svg><span class="m365">M365</span></button>
            <button class="app run" aria-label="Word"><svg viewBox="0 0 24 24"><path d="M7 1h15a2 2 0 0 1 2 2v4H5V3a2 2 0 0 1 2-2z" fill="#41a5ee"/><path d="M5 7h19v5H5z" fill="#2b7cd3"/><path d="M5 12h19v6H5z" fill="#185abd"/><path d="M5 18h19v3a2 2 0 0 1-2 2H7a2 2 0 0 1-2-2z" fill="#103f91"/><rect y="6" width="13" height="13" rx="1" fill="#185abd"/><path d="M2.500 9.500l2 6 2-5.500 2 5.500 2-6" fill="none" stroke="#fff" stroke-width="1.400"/></svg></button>
            <button class="app run" aria-label="Chrome"><svg viewBox="0 0 24 24"><circle cx="12" cy="12" r="12" fill="#fbc116"/><path d="M12 12L1.600 6A12 12 0 0 0 11 24l5-9z" fill="#229342"/><path d="M1.600 6a12 12 0 0 1 20.800 0H12v6l-5 2z" fill="#e33b2e"/><circle cx="12" cy="12" r="6" fill="#fff"/><circle cx="12" cy="12" r="4.700" fill="#2f7de9"/></svg></button>
            <button class="app run" aria-label="G App"><span class="gapp">G</span></button>
            <button class="app run current" aria-label="Excel"><svg viewBox="0 0 24 24"><use href="#excel"/></svg></button>
        </div>
        <div class="clock">10:07 AM<br>2/17/2025</div>
    </footer>

    <!-- save dialog -->
    <div class="overlay">
        <form class="dialog" role="dialog" aria-labelledby="dlg-title">
            <button type="button" class="dlg-close" aria-label="Close"><svg width="12" height="12"><use href="#close"/></svg></button>
            <div class="dlg-body">
                <h1 id="dlg-title">Save your changes to this file?</h1>
                <p>Avoid losing changes to this file in the future by saving it to a folder backed up to the cloud instead.</p>
                <label for="fname">File name</label>
                <div class="fname"><input id="fname" type="text" value="easalesorder" disabled><span>.csv</span></div>
                <label for="loc">Choose a Location</label>
                <button type="button" id="loc" class="location" aria-haspopup="listbox">
                    <svg width="28" height="24" viewBox="0 0 28 24" fill="#fafafa" stroke="#444"><path d="M.5 22.500v-19h27v19z"/><path d="M.5 4.500v-3h10l1.500 1.500-1.500 1.500z"/></svg>
                    <span><b>pythonProject</b>C:</span>
                    <svg width="10" height="10"><use href="#chev"/></svg>
                </button>
            </div>
            <div class="dlg-buttons">
                <button type="button" class="primary"><u>S</u>ave</button>
                <button type="button" class="focused">Do<u>n</u>'t Save</button>
                <button type="button">Cancel</button>
            </div>
        </form>
    </div>

    <script>
        const cols = ['AR', 'AS', 'AT', 'AU', 'AV', 'AW', 'AX', 'AY', 'AZ', 'BA', 'BB', 'BC', 'BD', 'BE', 'BF', 'BG', 'BH', 'BI', 'BJ', 'BK', 'BL', 'BM', 'BN', 'BO'];
        const address = 'Anisia Raif;719 Pegg Road;;;Greensboro;NC;27409;Internal Deliveries';
        const codes = [605, '400 - A', 400, 400, '400 - A', '400 - A', '400 - A', '400 - A'];

        const rows = [['Dispatch Info', 'Freight', 'IGLA Code', '605Amt', 'Tax Code', 'Calc Tax', 'Calc Total', 'TrueLocation']];
        codes.forEach((code, i) => {
            rows.push([address, '$30.01', code, i === 0 ? 30.01 : '', 'NC-F01', 9.19, 140.5, 'WS']);
        });

        const head = document.querySelector('#grid thead').insertRow();
        head.innerHTML = '<th class="corner"></th>' + cols.map(c => `<th class="c-${c}">${c}</th>`).join('');

        const body = document.querySelector('#grid tbody');
        for (let r = 0; r < 39; r++) {
            const tr = body.insertRow();
            if (r === 2) tr.className = 'current-row';
            let html = `<th>${r + 1}</th>`;
            cols.forEach((c, i) => {
                const v = rows[r] && rows[r][i] !== undefined ? rows[r][i] : '';
                html += `<td class="${typeof v === 'number' ? 'num' : ''}">${v}</td>`;
            });
            tr.innerHTML = html;
        }
        // active cell AY3
        body.rows[2].cells[8].className = 'selected';
    </script>
</body>
</html>
```
FILE: styles.css
```css
* {
    box-sizing: border-box;
}
body {
    margin: 0;
    height: 100vh;
    display: flex;
    flex-direction: column;
    overflow: hidden;
    position: relative;
    background: #efefef;
    color: #242424;
    font-family: "Open Sans", "Noto Sans", sans-serif;
    font-size: 11px;
}
button, input, select {
    font: inherit;
    color: inherit;
    background: none;
    border: none;
    padding: 0;
    margin: 0;
    outline: none;
}
svg {
    flex: none;
    overflow: visible;
}
.defs {
    position: absolute;
    width: 0;
    height: 0;
}

/* title bar */
.titlebar {
    height: 48px;
    flex: none;
    display: flex;
    align-items: center;
    padding-left: 16px;
    color: #b5b5b5;
    position: relative;
}
.app-icon {
    width: 16px;
    height: 16px;
}
.autosave {
    display: flex;
    align-items: center;
    gap: 7px;
    margin-left: 16px;
}
.toggle {
    width: 49px;
    height: 20px;
    border: 1px solid #b5b5b5;
    border-radius: 10px;
    background: #fff;
    display: flex;
    align-items: center;
    gap: 6px;
    padding-left: 3px;
}
.toggle input {
    display: none;
}
.toggle i {
    width: 14px;
    height: 14px;
    border-radius: 50%;
    background: #b5b5b5;
}
.tb {
    display: flex;
    margin-left: 13px;
}
.tb.list {
    margin: 0 -4px 0 2px;
    width: 12px;
}
.tb.customize {
    margin: 0 26px 0 16px;
}
.doc-name {
    display: flex;
    align-items: center;
    gap: 3px;
}
.search {
    position: absolute;
    left: 50%;
    transform: translateX(-50%);
    margin-left: 8px;
    width: 368px;
    height: 32px;
    border: 1px solid #cfcfcf;
    border-bottom: 2px solid #cacaca;
    border-radius: 4px;
    display: flex;
    align-items: center;
    gap: 13px;
    padding-left: 13px;
    font-size: 12px;
}
.search input {
    flex: 1;
}
.search input::placeholder {
    color: #b5b5b5;
}
.window-buttons {
    margin-left: auto;
    display: flex;
    align-items: center;
}
.window-buttons button {
    width: 48px;
    height: 24px;
    display: flex;
    align-items: center;
    justify-content: center;
}
.window-buttons .avatar {
    width: 24px;
    border-radius: 50%;
    background: #d0d0d0;
    margin-right: 12px;
}

/* tabs */
.tabs {
    height: 30px;
    flex: none;
    display: flex;
    align-items: center;
    padding: 0 12px 0 11px;
    font-size: 12px;
}
.tabs > button {
    height: 24px;
    margin: 0 11px;
    white-space: nowrap;
    padding-top: 2px;
    border-bottom: 2px solid transparent;
    line-height: 20px;
}
.tabs > .file {
    margin-right: 14px;
}
.tabs > .active {
    padding: 2px 1px 0;
    font-weight: 600;
    border-bottom-color: #0f703b;
}
.tab-actions {
    margin-left: auto;
    display: flex;
    gap: 8px;
}
.tab-actions button {
    height: 24px;
    border-radius: 4px;
    display: flex;
    align-items: center;
    justify-content: center;
    gap: 5px;
}
.comments {
    width: 90px;
    border: 1px solid #8a8a8a;
    background: #fff;
}
.share {
    width: 71px;
    background: #107c41;
    color: #fff;
}

/* ribbon */
.ribbon {
    height: 100px;
    flex: none;
    margin: 0 8px;
    background: #fff;
    border-radius: 8px;
    box-shadow: 0 1px 3px rgba(0, 0, 0, .25);
    display: flex;
}
.group {
    flex: none;
    position: relative;
    display: flex;
    flex-direction: column;
    padding: 4px 1px 2px 0;
}
.group::after {
    content: "";
    position: absolute;
    right: 0;
    top: 5px;
    bottom: 6px;
    width: 1px;
    background: #d1d1d1;
}
.clipboard { width: 175px; }
.font { width: 236px; }
.alignment { width: 302px; }
.number { width: 162px; }
.styles { width: 395px; }
.cells { width: 147px; }
.editing { width: 216px; }
.addins { width: 63px; }
.analyze { width: 62px; }
.acrobat { width: 85px; }

.tools {
    height: 78px;
    display: flex;
}
.caption {
    height: 16px;
    line-height: 15px;
    display: flex;
    justify-content: center;
    white-space: nowrap;
}
.caption span {
    flex: 1;
    text-align: center;
}
.caption button {
    width: 14px;
    display: flex;
    align-items: center;
    justify-content: center;
}
.rows {
    display: flex;
    flex-direction: column;
    gap: 8px;
    padding: 8px 0 0 7px;
}
.row {
    display: flex;
    align-items: center;
    height: 24px;
}
.ico {
    width: 26px;
    height: 24px;
    display: flex;
    align-items: center;
    justify-content: center;
    font-size: 13px;
    color: #333;
}
.ico i {
    font-family: "Liberation Serif", serif;
    font-size: 15px;
}
.ico.sign {
    font-size: 16px;
}
.ico.pressed {
    border: 1px solid #616161;
    border-radius: 4px;
    background: #ebebeb;
    width: 24px;
    margin: 0 1px;
}
.drop {
    width: 12px;
    height: 24px;
    display: flex;
    align-items: center;
    justify-content: center;
}
.drop.currency {
    margin-right: 3px;
}
.sep {
    width: 1px;
    height: 24px;
    margin: 0 3px;
    background: #d1d1d1;
}
.sep.tight {
    margin: 0 1px;
}
.combo {
    position: relative;
    height: 24px;
    margin-left: 1px;
}
.combo select {
    appearance: none;
    width: 100%;
    height: 100%;
    border: 1px solid #7a7a7a;
    border-radius: 4px;
    padding-left: 3px;
    background: #fff;
}
.combo svg {
    position: absolute;
    right: 1px;
    top: 7px;
}
.combo.name { width: 117px; }
.combo.size { width: 49px; margin: 0 2px; }
.combo.format { width: 146px; }

.big {
    width: 44px;
    flex: none;
    display: flex;
    flex-direction: column;
    align-items: center;
    padding-top: 3px;
    line-height: 16px;
    white-space: nowrap;
}
.big span {
    margin-top: 3px;
}
.big.disabled {
    color: #b0b0b0;
    width: 48px;
    margin-left: 10px;
}
.big.mid { width: 58px; }
.big.wide { width: 78px; }
.small-list {
    display: flex;
    flex-direction: column;
}
.small-list button {
    height: 26px;
    display: flex;
    align-items: center;
    gap: 4px;
    white-space: nowrap;
    padding-bottom: 2px;
}
.small-list .far {
    margin-left: 12px;
}
.clipboard .small-list {
    padding-left: 2px;
}
.align-left {
    width: 139px;
    position: relative;
}
.align-left::after {
    content: "";
    position: absolute;
    left: 145px;
    top: 7px;
    width: 1px;
    height: 62px;
    background: #d1d1d1;
}
.align-right {
    padding-left: 17px;
}
.line {
    height: 24px;
    display: flex;
    align-items: center;
    gap: 4px;
    white-space: nowrap;
}
.line .far {
    margin-left: 15px;
}

.styles .tools {
    padding-left: 6px;
}
.gallery {
    margin: 8px 0 0 3px;
    width: 239px;
    height: 62px;
    border: 1px solid #d1d1d1;
    border-radius: 4px;
    display: flex;
    font-size: 13px;
}
.swatches {
    flex: 1;
    display: grid;
    grid-template-columns: 100px 100px;
    grid-template-rows: 22px 22px;
    gap: 6px;
    padding: 5px 0 0 4px;
}
.swatches button {
    text-align: left;
    padding: 0 0 2px 4px;
}
.normal {
    background: #fff;
    color: #000;
    outline: 1px solid #616161;
    outline-offset: 2px;
    box-shadow: 0 0 0 2px #ebebeb;
}
.bad { background: #ffc7ce; color: #9c0006; }
.good { background: #c6efce; color: #006100; }
.neutral { background: #ffeb9c; color: #9c5700; }
.more {
    width: 25px;
    margin: -1px;
    border: 1px solid #616161;
    border-radius: 0 4px 4px 0;
}
.cells .tools {
    padding-left: 7px;
}
.editing .tools {
    padding-left: 11px;
}
.editing .small-list {
    width: 104px;
}
.editing .small-list .far {
    margin-left: auto;
    margin-right: 7px;
}
.editing .big {
    width: 46px;
}
.addins .tools, .analyze .tools, .acrobat .tools {
    justify-content: center;
}
.collapse {
    margin: auto 11px 4px auto;
    display: flex;
}

/* formula bar */
.formula-bar {
    flex: none;
    display: flex;
    margin: 8px 8px 7px;
    height: 26px;
    color: #333;
}
.name-box, .fx-box, .formula {
    border: 1px solid #d1d1d1;
    border-radius: 4px;
    background: #fff;
    display: flex;
    align-items: center;
}
.name-box {
    width: 102px;
    padding-right: 7px;
}
.name-box input, .formula input {
    flex: 1;
    width: 0;
}
.dots {
    width: 2px;
    height: 10px;
    margin: 8px 9px;
    background: repeating-linear-gradient(#444 0 2px, transparent 2px 4px);
}
.fx-box {
    width: 86px;
    color: #b5b5b5;
    padding: 0 1px 0 6px;
    gap: 9px;
}
.fx-box button {
    font-family: "Liberation Serif", serif;
    font-style: italic;
    font-size: 19px;
    color: #222;
    width: 14px;
}
.fx-box svg:last-child {
    margin-left: -3px;
    color: #8a8a8a;
}
.formula {
    flex: 1;
    margin-left: 4px;
    padding: 0 3px 0 10px;
    font-family: Roboto, sans-serif;
    font-size: 14px;
    color: #222;
}
.formula svg {
    color: #8a8a8a;
}

/* sheet */
.sheet {
    flex: 1;
    min-height: 0;
    display: flex;
}
.grid-wrap {
    flex: 1;
    min-width: 0;
    overflow: hidden;
    background: #fff;
}
#grid {
    table-layout: fixed;
    border-collapse: separate;
    border-spacing: 0;
    width: 1926px;
    font-family: Roboto, sans-serif;
    font-size: 14px;
    color: #000;
}
#grid th {
    background: #efefef;
    font-family: "Open Sans", sans-serif;
    font-size: 12px;
    font-weight: normal;
    color: #444;
    padding: 0;
}
#grid thead th {
    width: 64px;
    height: 20px;
    line-height: 19px;
    border-right: 1px solid #d4d4d4;
    border-bottom: 1px solid #ababab;
}
#grid thead .corner {
    width: 26px;
    background: linear-gradient(135deg, #efefef 50%, #dcdcdc 50%) no-repeat 10px 5px / 12px 12px #efefef;
    border-right: 0;
}
#grid .c-AR { width: 430px; padding-right: 6px; }
#grid .c-AS { width: 51px; }
#grid .c-AT { width: 68px; }
#grid .c-AU { width: 52px; }
#grid .c-AV { width: 62px; }
#grid .c-AW { width: 58px; }
#grid .c-AX { width: 68px; }
#grid .c-AY {
    width: 87px;
    background: #dfdfdf;
    color: #217346;
    border-bottom: 2px solid #107c41;
    line-height: 18px;
}
#grid tbody th {
    border-right: 1px solid #ababab;
    border-bottom: 1px solid #e0e0e0;
}
#grid tbody .current-row th {
    background: #dfdfdf;
    color: #217346;
    border-right: 2px solid #107c41;
}
#grid td {
    height: 19px;
    line-height: 18px;
    padding: 0 0 0 2px;
    border-right: 1px solid #e0e0e0;
    border-bottom: 1px solid #e0e0e0;
    white-space: nowrap;
}
/* first column is scrolled partly under the row headers */
#grid td:nth-child(2) {
    text-indent: -6px;
    overflow: hidden;
}
#grid td.num {
    text-align: right;
    padding-right: 2px;
}
#grid td.selected {
    outline: 2px solid #107c41;
    position: relative;
}
.selected::after {
    content: "";
    position: absolute;
    right: -3px;
    bottom: -3px;
    width: 6px;
    height: 6px;
    background: #107c41;
    border: 1px solid #fff;
    border-width: 1px 0 0 1px;
}
.vscroll {
    width: 21px;
    padding: 0 3px 0 2px;
}
.track {
    height: 100%;
    background: #f5f5f5;
    border-radius: 8px;
    display: flex;
    flex-direction: column;
    align-items: center;
    gap: 3px;
    padding: 6px 0 2px;
}
.track b {
    flex: 1;
    width: 9px;
    border-radius: 5px;
    background: #6e6e6e;
    margin-bottom: 6px;
}
.track i, .hscroll i {
    border: 5px solid transparent;
}
.track .up {
    border-top: 0;
    border-bottom: 8px solid #6e6e6e;
}
.track .down {
    border-bottom: 0;
    border-top: 8px solid #6e6e6e;
}

/* sheet tabs */
.sheet-tabs {
    height: 32px;
    flex: none;
    display: flex;
    border-top: 1px solid #dcdcdc;
    padding: 0 19px 0 16px;
}
.nav-arrow {
    width: 32px;
}
.sheet-tab {
    margin: -1px 0 0 35px;
    width: 98px;
    height: 29px;
    background: #fff;
    border: 1px solid #dcdcdc;
    border-top: 0;
    border-radius: 0 0 4px 4px;
    font-size: 13px;
    font-weight: 600;
    line-height: 22px;
}
.sheet-tab span {
    display: inline-block;
    border-bottom: 2px solid #107c41;
}
.add-sheet {
    margin-left: 3px;
    border-left: 1px solid #d1d1d1;
    height: 18px;
    margin-top: 6px;
    padding-left: 41px;
}
.sheet-tabs .dots {
    margin: 11px 15px 0 auto;
}
.hscroll {
    width: 730px;
    height: 18px;
    margin-top: 6px;
    border-radius: 9px;
    background: #f5f5f5;
    display: flex;
    align-items: center;
    padding: 0 4px;
}
.hscroll .left {
    border-left: 0;
    border-right: 8px solid #6e6e6e;
}
.hscroll .right {
    border-right: 0;
    border-left: 8px solid #6e6e6e;
}
.hscroll b {
    width: 201px;
    height: 9px;
    border-radius: 5px;
    background: #6e6e6e;
    margin: 0 8px 0 auto;
}

/* status bar */
.status {
    height: 22px;
    flex: none;
    display: flex;
    align-items: center;
    gap: 18px;
    padding: 0 8px 0 11px;
    background: #f4f4f4;
    border-top: 1px solid #fff;
    white-space: nowrap;
}
.access {
    display: flex;
    align-items: center;
    gap: 2px;
}
.status-right {
    margin-left: auto;
    display: flex;
    align-items: center;
}
.display {
    display: flex;
    align-items: center;
    gap: 3px;
    margin-right: 19px;
}
.view {
    width: 40px;
    height: 22px;
    display: flex;
    align-items: center;
    justify-content: center;
}
.view.on {
    background: #dedede;
}
.zoom-btn {
    width: 19px;
    font-size: 16px;
    line-height: 16px;
}
.zoom {
    appearance: none;
    width: 101px;
    height: 12px;
    background: linear-gradient(#777, #777) center / 100% 1px no-repeat;
}
.zoom::-webkit-slider-thumb {
    appearance: none;
    width: 5px;
    height: 11px;
    background: #5c5c5c;
}
.percent {
    width: 34px;
    text-align: right;
}

/* taskbar */
.taskbar {
    height: 48px;
    flex: none;
    display: grid;
    grid-template-columns: 1fr auto 1fr;
    align-items: center;
    padding-bottom: 2px;
    border-top: 1px solid #aab2c4;
    background: linear-gradient(90deg, #e3eef8 0, #e2edf8 20%, #d2e1fb 25%, #d5dcf5 30%, #d1e0f9 38%, #d3e0f9 63%, #d6daee 72%, #dfe9f6 80%, #e1ecf7 100%);
}
.weather {
    display: flex;
    align-items: center;
    gap: 9px;
    padding-left: 21px;
    line-height: 16px;
    color: #222;
}
.weather p {
    margin: 0;
}
.weather span {
    color: #5c6066;
}
.weather i {
    width: 21px;
    height: 21px;
    border-radius: 50%;
    background: linear-gradient(135deg, #f5bd30, #f0630f);
}
.apps {
    display: flex;
    align-items: center;
}
.app {
    width: 40px;
    height: 40px;
    margin: 0 2px;
    padding: 0;
    position: relative;
    display: flex;
    align-items: center;
    justify-content: center;
    border-radius: 4px;
}
.app > svg {
    width: 24px;
    height: 24px;
}
.run::after {
    content: "";
    position: absolute;
    bottom: 1px;
    left: 17px;
    width: 6px;
    height: 3px;
    border-radius: 2px;
    background: #80868f;
}
.teams {
    background: #fde4e5;
}
.teams::after {
    background: #c42b1c;
}
.current {
    background: #eaeef8;
}
.current::after {
    left: 12px;
    width: 16px;
    background: #0078d4;
}
.badge {
    position: absolute;
    border-radius: 50%;
    display: flex;
    align-items: center;
    justify-content: center;
    color: #fff;
}
.mail {
    right: 3px;
    top: 2px;
    width: 15px;
    height: 15px;
    background: #5bb9e8;
}
.count {
    right: 3px;
    top: 2px;
    width: 15px;
    height: 15px;
    background: #e8262d;
    font-size: 9px;
}
.three {
    right: 3px;
    top: 3px;
    width: 16px;
    height: 16px;
    background: #c42b1c;
}
.eci {
    width: 24px;
    height: 24px;
    background: #f00;
    color: #fff;
    font-size: 14px;
    line-height: 22px;
    font-weight: bold;
}
.m365 {
    position: absolute;
    left: 13px;
    bottom: 7px;
    padding: 0 1px;
    background: #111;
    color: #fff;
    font-size: 7px;
    line-height: 7px;
    font-weight: bold;
}
.gapp {
    width: 20px;
    height: 20px;
    border-radius: 4px;
    background: linear-gradient(#5b2aa8, #23085c);
    color: #fff;
    font-size: 14px;
    line-height: 20px;
    font-weight: bold;
}
.task-search {
    width: 218px;
    height: 30px;
    margin: 0 3px 0 4px;
    border: 1px solid #c5d0e6;
    border-radius: 15px;
    background: #f3f6fd;
    display: flex;
    align-items: center;
    gap: 10px;
    padding-left: 10px;
    font-size: 13px;
}
.task-search input {
    flex: 1;
    width: 0;
}
.task-search input::placeholder {
    color: #5c5c5c;
}
.case {
    width: 52px;
    height: 26px;
    margin-right: 1px;
    border-radius: 13px;
    background: #e0e4ea;
    display: flex;
    align-items: center;
    justify-content: center;
}
.clock {
    text-align: right;
    padding-right: 23px;
    line-height: 16px;
    color: #4f5660;
}

/* dialog */
.overlay {
    position: absolute;
    inset: 0;
    padding-bottom: 20px;
    display: flex;
    align-items: center;
    justify-content: center;
}
.dialog {
    position: relative;
    width: 446px;
    background: #fff;
    border: 1px solid #107c41;
    border-radius: 8px;
    box-shadow: 0 24px 36px rgba(0, 0, 0, .28), 0 0 14px rgba(0, 0, 0, .2);
}
.dlg-close {
    position: absolute;
    right: 9px;
    top: 8px;
    display: flex;
}
.dlg-body {
    padding: 31px 25px 23px;
    border-bottom: 1px solid #d1d1d1;
}
.dialog h1 {
    margin: 0;
    font-size: 18px;
    line-height: 28px;
    font-weight: 600;
    color: #107c41;
}
.dialog p {
    max-width: 370px;
    margin: 2px 0 19px;
    line-height: 16px;
}
.dialog label {
    display: block;
    line-height: 16px;
    margin-bottom: 5px;
}
.fname {
    height: 30px;
    display: flex;
    align-items: center;
    border: 1px solid #e0e0e0;
    border-radius: 4px;
    background: #f0f0f0;
    padding: 0 9px 0 10px;
    margin-bottom: 26px;
    color: #bdbdbd;
}
.fname input {
    flex: 1;
}
.location {
    width: 100%;
    height: 50px;
    border: 1px solid #8a8a8a;
    border-radius: 4px;
    display: flex;
    align-items: center;
    padding: 1px 8px 0 10px;
    gap: 15px;
    text-align: left;
    line-height: 18px;
}
.location span {
    flex: 1;
}
.location b {
    display: block;
    font-size: 14px;
    font-weight: normal;
}
.dlg-buttons {
    display: flex;
    justify-content: flex-end;
    gap: 9px;
    padding: 18px 25px 21px;
}
.dlg-buttons button {
    width: 70px;
    height: 24px;
    border: 1px solid #8a8a8a;
    border-radius: 4px;
}
.dlg-buttons .primary {
    background: #107c41;
    border-color: #107c41;
    color: #fff;
}
.dlg-buttons .focused {
    width: 88px;
    border: 2px solid #000;
    background: #f5f5f5;
}
```
